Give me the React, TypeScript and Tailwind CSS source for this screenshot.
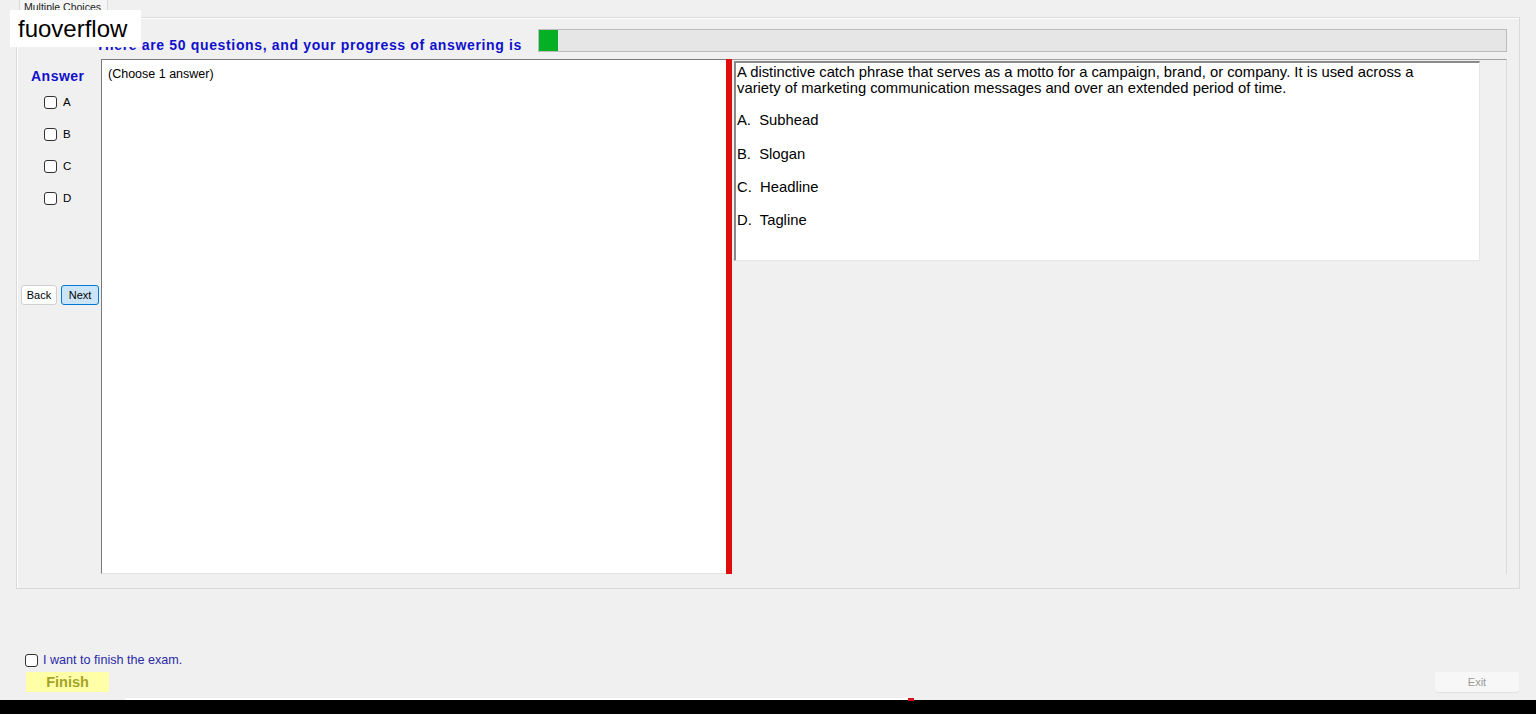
const options = ["A", "B", "C", "D"];

function Box({ className = "" }: { className?: string }) {
  return (
    <span
      className={`inline-block h-[13px] w-[13px] rounded-[3px] border border-[#333] bg-white ${className}`}
    />
  );
}

export default function App() {
  const answered = 1;
  const total = 50;

  return (
    <div
      className="relative flex h-[714px] w-[1536px] flex-col overflow-hidden bg-[#f0f0f0] text-black"
      style={{ fontFamily: '"Liberation Sans", Arial, sans-serif' }}
    >
      {/* tab strip */}
      <div className="flex h-[17px] items-end pl-[19px]">
        <div className="-mt-[4px] h-[19px] w-[89px] border border-b-0 border-[#d9d9d9] bg-[#f5f5f5] pl-[4px] text-[10.5px] leading-[16px] text-[#222]">
          Multiple Choices
        </div>
      </div>

      {/* tab page */}
      <div className="mx-[16px] flex h-[572px] flex-col border border-[#dadada] pt-[11px] pl-[4px] pr-[12px] pb-[14px] shadow-[inset_1px_1px_0_#fff]">
        <div className="flex h-[22px] items-center">
          <p className="mt-[10px] w-[501px] text-right text-[14px] font-bold tracking-[0.65px] text-[#1010cc]">
            There are {total} questions, and your progress of answering is
          </p>
          <div className="ml-[16px] h-[23px] flex-1 border border-[#bcbcbc] bg-[#e6e6e6]">
            <div
              className="h-full bg-[#06b025]"
              style={{ width: `${(answered / total) * 100}%` }}
            />
          </div>
        </div>

        <div className="mt-[8px] flex flex-1">
          {/* answer column */}
          <div className="flex w-[80px] flex-col">
            <p className="ml-[10px] mt-[7px] text-[14px] font-bold tracking-[0.5px] text-[#1010cc]">
              Answer
            </p>
            <div className="ml-[23px] mt-[9px] flex flex-col gap-[19px]">
              {options.map((o) => (
                <label key={o} className="flex items-center gap-[6px] text-[11.5px] leading-[13px]">
                  <Box />
                  <span>{o}</span>
                </label>
              ))}
            </div>
            <div className="mt-[80px] flex gap-[4px]">
              <button
                type="button"
                className="h-[20px] w-[36px] rounded-[3px] border border-[#d0d0d0] bg-white text-[11px]"
              >
                Back
              </button>
              <button
                type="button"
                className="h-[20px] w-[38px] rounded-[3px] border border-[#0078d7] bg-[#cce4f7] text-[11px]"
              >
                Next
              </button>
            </div>
          </div>

          {/* question list box */}
          <div className="w-[625px] border-t-[1px] border-l-[1px] border-b border-[#7a7a7a] border-b-[#e3e3e3] bg-white px-[6px] pt-[5px] text-[12.5px]">
            (Choose 1 answer)
          </div>

          {/* splitter */}
          <div className="w-[6px] bg-[#e00d0d]" />

          {/* question panel */}
          <div className="flex flex-1 border-t border-[#a0a0a0] border-r border-r-[#dcdcdc]">
            <div className="ml-[2px] mt-[1px] h-[200px] w-[746px] border-t-2 border-l-2 border-[#8a8a8a] border-r border-r-[#e6e6e6] border-b border-b-[#e6e6e6] bg-white pl-[1px] pt-[1px] text-[14.8px] leading-[16px] whitespace-pre">
              <p>
                A distinctive catch phrase that serves as a motto for a campaign, brand, or company. It is used across a
              </p>
              <p>variety of marketing communication messages and over an extended period of time.</p>
              <p className="mt-[16px]">A.  Subhead</p>
              <p className="mt-[18px]">B.  Slogan</p>
              <p className="mt-[17px]">C.  Headline</p>
              <p className="mt-[17px]">D.  Tagline</p>
            </div>
          </div>
        </div>
      </div>

      {/* footer */}
      <div className="flex flex-1 flex-col justify-end pb-[8px]">
        <label className="ml-[25px] flex items-center gap-[5px] text-[12.6px] text-[#2a2aa8]">
          <Box />
          <span>I want to finish the exam.</span>
        </label>
        <div className="mt-[2px] flex items-center justify-between pl-[26px] pr-[17px]">
          <button
            type="button"
            className="h-[20px] w-[83px] bg-[#ffffa8] text-[14.5px] font-bold text-[#a3a326]"
          >
            Finish
          </button>
          <button
            type="button"
            className="h-[20px] w-[84px] rounded-[3px] bg-[#f7f7f7] text-[11px] text-[#9a9a9a] shadow-[0_1px_1px_#e0e0e0]"
          >
            Exit
          </button>
        </div>
      </div>

      {/* taskbar strip */}
      <div className="relative h-[14px] bg-black">
        <div className="absolute left-[125px] top-[-2px] h-[2px] w-[785px] bg-white" />
        <div className="absolute left-[908px] top-[-2px] h-[3px] w-[6px] bg-[#d01020]" />
      </div>

      {/* watermark overlay */}
      <div className="absolute left-[10px] top-[10px] flex h-[37px] w-[131px] items-center bg-white pl-[8px] text-[24px] text-black">
        fuoverflow
      </div>
    </div>
  );
}
